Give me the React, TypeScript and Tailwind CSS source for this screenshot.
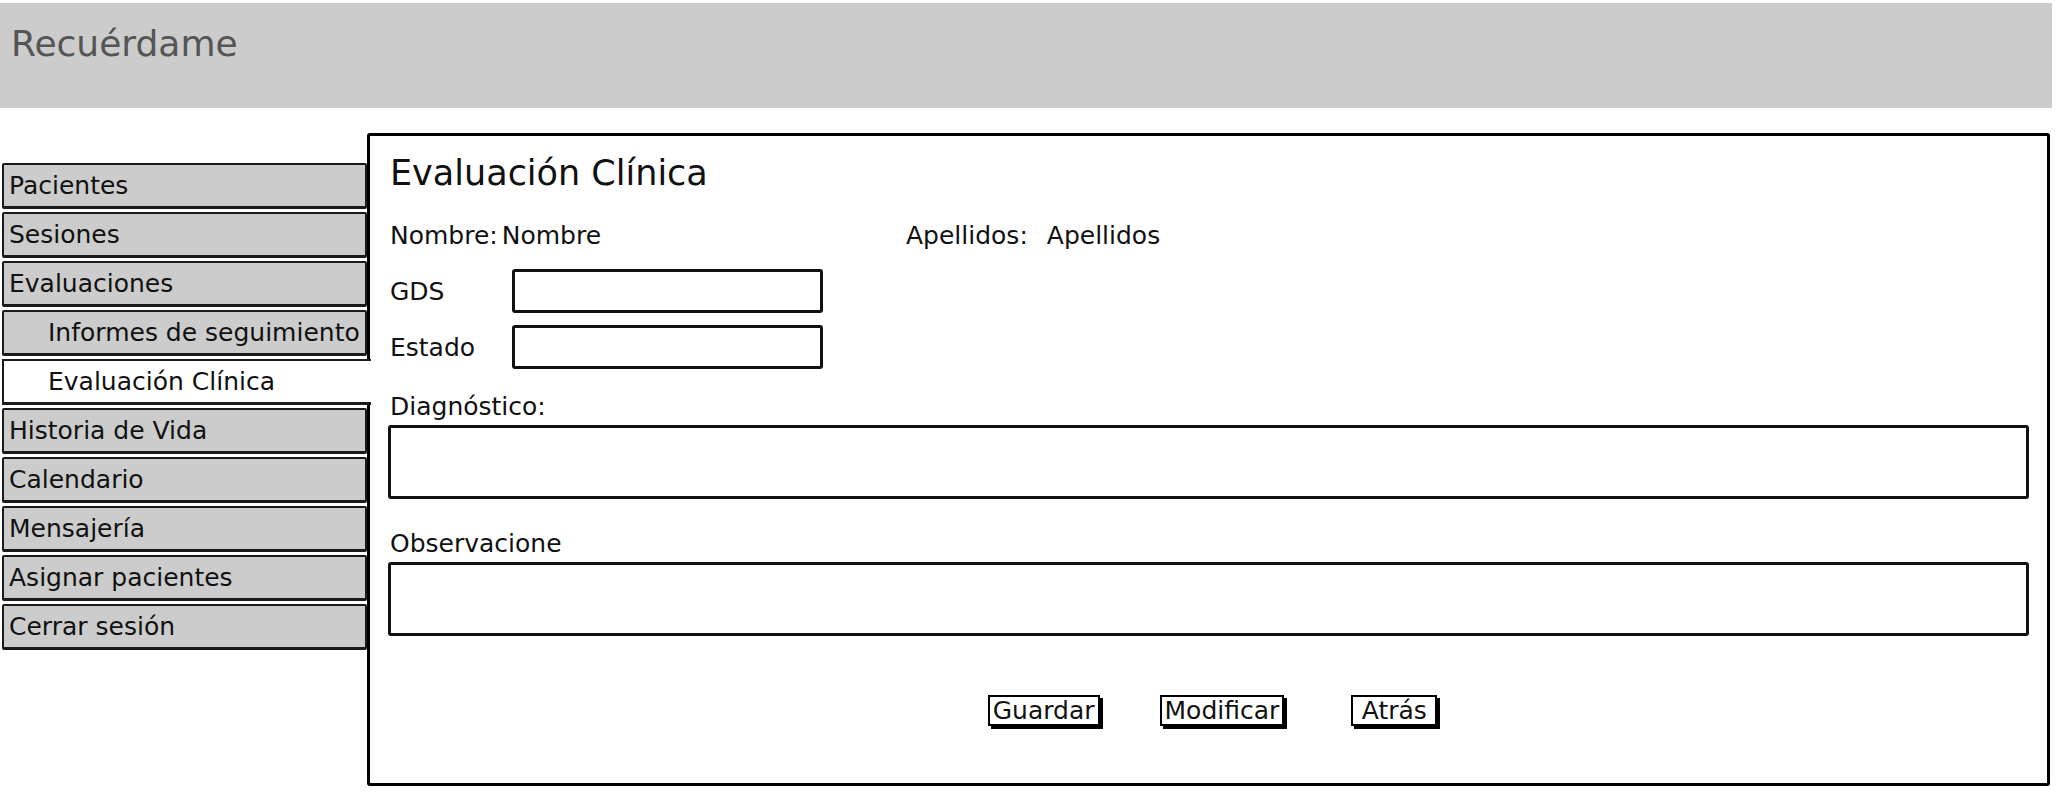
import React from "react";

const items: { label: string; sub?: boolean; active?: boolean }[] = [
  { label: "Pacientes" },
  { label: "Sesiones" },
  { label: "Evaluaciones" },
  { label: "Informes de seguimiento", sub: true },
  { label: "Evaluación Clínica", sub: true, active: true },
  { label: "Historia de Vida" },
  { label: "Calendario" },
  { label: "Mensajería" },
  { label: "Asignar pacientes" },
  { label: "Cerrar sesión" },
];

function NavItem({ label, sub, active }: { label: string; sub?: boolean; active?: boolean }) {
  if (active) {
    return (
      <div className="relative z-10 flex h-[46px] w-[369px] items-center border-y-2 border-l-2 border-b-[3px] border-[#1a1a1a] bg-white pl-[44px] text-[25px] leading-none whitespace-nowrap">
        {label}
      </div>
    );
  }
  return (
    <div
      className={
        "flex h-[46px] w-[365px] items-center rounded-[2px] border-2 border-b-[3px] border-[#1a1a1a] bg-[#cccccc] text-[25px] leading-none whitespace-nowrap " +
        (sub ? "pl-[44px]" : "pl-[5px]")
      }
    >
      {label}
    </div>
  );
}

function Btn({ label, w }: { label: string; w?: string }) {
  return (
    <div
      className={
        "flex h-[31px] items-center justify-center border-2 border-black bg-white px-[3px] text-[25px] leading-none shadow-[3px_3px_0_0_#000] " +
        (w ?? "")
      }
    >
      {label}
    </div>
  );
}

export default function App() {
  return (
    <div className="h-[798px] w-[2062px] overflow-hidden bg-white font-['DejaVu_Sans',sans-serif] text-[#111]">
      <div className="pt-[3px] pr-[10px]">
        <header className="h-[105px] bg-[#cccccc] pl-[11px] pt-[23px] text-[36px] leading-none text-[#555]">
          Recuérdame
        </header>
      </div>
      <div className="mt-[25px] flex pr-[12px]">
        <nav className="flex w-[367px] shrink-0 flex-col gap-[3px] pt-[30px] pl-[2px]">
          {items.map((it) => (
            <NavItem key={it.label} {...it} />
          ))}
        </nav>
        <main className="flex h-[653px] flex-1 flex-col rounded-[3px] border-[3px] border-black bg-white pt-[20px] pr-[18px] pl-[18px]">
          <h1 className="pl-[2px] text-[35px] leading-none font-normal">Evaluación Clínica</h1>
          <div className="mt-[32px] flex pl-[2px] text-[25px] leading-none">
            <div className="flex w-[516px] gap-[4px]">
              <span>Nombre:</span>
              <span>Nombre</span>
            </div>
            <div className="flex gap-[19px]">
              <span>Apellidos:</span>
              <span>Apellidos</span>
            </div>
          </div>
          <div className="mt-[21px] flex flex-col gap-[12px] pl-[2px] text-[25px] leading-none">
            <div className="flex items-center">
              <span className="w-[122px]">GDS</span>
              <div className="h-[44px] w-[311px] rounded-[3px] border-[3px] border-[#111]" />
            </div>
            <div className="flex items-center">
              <span className="w-[122px]">Estado</span>
              <div className="h-[44px] w-[311px] rounded-[3px] border-[3px] border-[#111]" />
            </div>
          </div>
          <div className="mt-[25px] pl-[2px] text-[25px] leading-none">Diagnóstico:</div>
          <div className="mt-[6px] h-[74px] rounded-[3px] border-[3px] border-[#111]" />
          <div className="mt-[32px] pl-[2px] text-[25px] leading-none">Observacione</div>
          <div className="mt-[6px] h-[74px] rounded-[3px] border-[3px] border-[#111]" />
          <div className="mt-[59px] flex justify-center pl-[8px]">
            <Btn label="Guardar" />
            <div className="w-[60px]" />
            <Btn label="Modificar" />
            <div className="w-[67px]" />
            <Btn label="Atrás" w="w-[86px]" />
          </div>
        </main>
      </div>
    </div>
  );
}
